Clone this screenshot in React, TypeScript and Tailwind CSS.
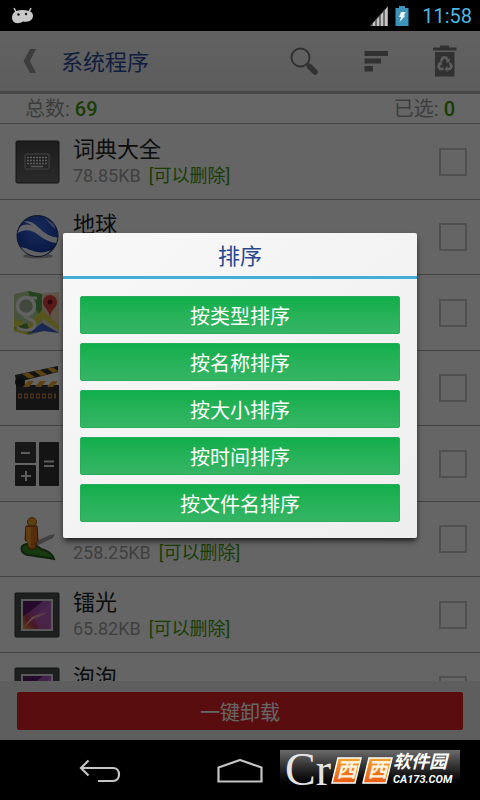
import type { ReactNode } from "react";

const FONT = "font-[Roboto,'Noto_Sans_CJK_SC',sans-serif]";

function KeyboardIcon() {
  return (
    <svg viewBox="0 0 46 46" className="size-[46px]" aria-hidden="true">
      <defs>
        <linearGradient id="kb" x1="0" y1="0" x2="0" y2="1">
          <stop offset="0" stopColor="#4a4a4a" />
          <stop offset="1" stopColor="#6a6a6a" />
        </linearGradient>
      </defs>
      <rect x="2" y="2" width="43" height="42" rx="1.5" fill="url(#kb)" stroke="#333" />
      <rect x="11" y="15" width="24" height="15" rx="1" fill="none" stroke="#a8a8a8" />
      <path d="M13 18.5h20M13 21.5h20M13 24.5h20" stroke="#e4e4e4" strokeWidth="1.6" strokeDasharray="2 1" />
      <path d="M17 27.5h12" stroke="#e4e4e4" strokeWidth="1.4" />
    </svg>
  );
}

function EarthIcon() {
  return (
    <svg viewBox="0 0 46 46" className="size-[46px]" aria-hidden="true">
      <defs>
        <radialGradient id="earth" cx="0.5" cy="0.35" r="0.7">
          <stop offset="0" stopColor="#3c6ce0" />
          <stop offset="0.7" stopColor="#1f45b8" />
          <stop offset="1" stopColor="#14256b" />
        </radialGradient>
        <clipPath id="globe">
          <circle cx="23.5" cy="22" r="20" />
        </clipPath>
      </defs>
      <ellipse cx="24" cy="42" rx="15" ry="2.5" fill="#aaa" />
      <circle cx="23.5" cy="22" r="20.5" fill="url(#earth)" stroke="#26366e" />
      <g clipPath="url(#globe)" fill="#f2f4ff">
        <path d="M9 8C15 6 19 8 25 14C31 20 37 23 45 24V29C36 29 30 25 23 20C16 15 10 15 2 20L6 13C10 10 14 10 18 12C15 9 12 8 9 8Z" />
        <path d="M5 33C12 33 17 37 23 38C28 39 33 38 37 36L31 42C21 43 12 42 5 33Z" />
        <path d="M31 4C34 8 38 13 42 15L40 10Z" opacity="0.5" />
      </g>
    </svg>
  );
}

function MapsIcon() {
  return (
    <svg viewBox="0 0 46 46" className="size-[46px]" aria-hidden="true">
      <path d="M0 4L14 1L28 4L45 2V43L30 41L16 45L0 41Z" fill="#d8d4c4" />
      <path d="M0 4L14 1L28 4V41L16 45L0 41Z" fill="#b4d098" />
      <path d="M14 1L28 4V28L18 14Z" fill="#57a84c" />
      <path d="M28 4L45 2V36L28 22Z" fill="#e8cfb0" />
      <path d="M0 28L14 36L28 20L45 36V40L28 28L14 45L0 41Z" fill="#d8d23c" />
      <path d="M14 44L28 33L45 43L30 41Z" fill="#4563c8" />
      <path d="M0 38L13 33L17 44Z" fill="#598e3e" />
      <circle cx="12" cy="16" r="8.5" fill="#a4b79d" stroke="#f5f5f5" strokeWidth="3.5" />
      <path d="M14 8h9M11 25C9 29 20 28 21 34C22 41 8 42 3 37" fill="none" stroke="#f0f0f0" strokeWidth="3" />
      <path d="M36 27C35 19 29 18 29 12A7 7 0 0 1 43 12C43 18 37 19 36 27Z" fill="#e04242" />
      <circle cx="36" cy="12" r="2.5" fill="#701818" />
    </svg>
  );
}

function ClapperIcon() {
  return (
    <svg viewBox="0 0 46 46" className="size-[46px]" aria-hidden="true">
      <path d="M1 10L44 1V7L8 16L12 20H45V45H2V16Z" fill="#333" />
      <g fill="#e9a82c">
        <path d="M8 9L14 7.5L21 12L15 13.5Z" />
        <path d="M20 6L26 5L33 9.5L27 11Z" />
        <path d="M33 3.5L39 2.5L44 6L39 8Z" />
        <path d="M14 16H20L15 22H9Z" />
        <path d="M26 16H32L27 22H21Z" />
        <path d="M38 16H44L39 22H33Z" />
      </g>
      <circle cx="6" cy="17" r="5" fill="#222" />
      <path d="M4 31h38" stroke="#b8783c" strokeWidth="5" strokeDasharray="4 2" />
      <path d="M5 31h36" stroke="#333" strokeWidth="2" strokeDasharray="2 4" />
    </svg>
  );
}

function CalculatorIcon() {
  return (
    <svg viewBox="0 0 46 46" className="size-[46px]" aria-hidden="true">
      <rect x="1" y="1" width="21" height="21" rx="1" fill="#3c3c3f" />
      <rect x="1" y="24" width="21" height="21" rx="1" fill="#323235" />
      <rect x="25" y="1" width="20" height="44" rx="1" fill="#323235" />
      <path d="M7 12h9M7 35h10M12 30v10M30 20.5h10M30 25h10" stroke="#e8e8e8" strokeWidth="2" />
    </svg>
  );
}

function PegmanIcon() {
  return (
    <svg viewBox="0 0 46 46" className="size-[46px]" aria-hidden="true">
      <path d="M18 27L36 19L41 18L39 22L20 31Z" fill="#a0a0a0" />
      <path d="M13 28C5 29 6 37 14 39C22 40 27 41 40 43C38 37 34 35 27 33C24 30 19 28 13 28Z" fill="#3c8c28" stroke="#24571b" strokeWidth="2" />
      <circle cx="18" cy="6" r="4.5" fill="#e9a02c" stroke="#94551b" />
      <path d="M12 10H23L24 24L22 27V33H15V27L11 24Z" fill="#dc701f" stroke="#763611" />
      <path d="M12 11H17V31H15L12 23Z" fill="#ed982e" />
    </svg>
  );
}

function WallpaperIcon() {
  return (
    <svg viewBox="0 0 46 46" className="size-[46px]" aria-hidden="true">
      <defs>
        <linearGradient id="laser" x1="0" y1="1" x2="1" y2="0">
          <stop offset="0" stopColor="#ef9a29" />
          <stop offset="0.25" stopColor="#b33c58" />
          <stop offset="0.5" stopColor="#ab4daa" />
          <stop offset="1" stopColor="#a45cc0" />
        </linearGradient>
      </defs>
      <rect x="1" y="1" width="44" height="44" rx="1" fill="#4b5052" stroke="#2c3031" />
      <rect x="7" y="7" width="32" height="32" fill="#e0e0e0" />
      <rect x="9" y="9" width="28" height="28" fill="url(#laser)" />
      <path d="M9 9H29L18 18L9 24Z" fill="#5c1c6b" />
      <path d="M10 35L18 25L24 22.5L34 20L25 25L19 27Z" fill="#ffc6a0" />
      <path d="M19 26L37 10V37H25Z" fill="#c46ac8" opacity="0.5" />
    </svg>
  );
}

type AppRow = { id: number; name?: string; size?: string; icon: ReactNode };

const APPS: AppRow[] = [
  { id: 1, name: "词典大全", size: "78.85KB", icon: <KeyboardIcon /> },
  { id: 2, name: "地球", icon: <EarthIcon /> },
  { id: 3, icon: <MapsIcon /> },
  { id: 4, icon: <ClapperIcon /> },
  { id: 5, icon: <CalculatorIcon /> },
  { id: 6, size: "258.25KB", icon: <PegmanIcon /> },
  { id: 7, name: "镭光", size: "65.82KB", icon: <WallpaperIcon /> },
  { id: 8, name: "泡泡", icon: <WallpaperIcon /> },
];

const SORTS = ["按类型排序", "按名称排序", "按大小排序", "按时间排序", "按文件名排序"];

function StatusBar() {
  return (
    <div className="flex h-[31px] shrink-0 items-center bg-black pr-2 pl-[11px]">
      <svg viewBox="0 0 23 17" className="h-[17px] w-[23px]" aria-hidden="true">
        <path d="M3 1L5 5M20 1L18 5" stroke="#c8c8c8" strokeWidth="1.5" />
        <path d="M5 4C9 2.5 14 2.5 18 4C22 5 23 9 21 12C19 15 15 15 12 14.5C9 16.5 4 17 2 14C0 11 1 6 5 4Z" fill="#c8c8c8" />
        <circle cx="7.5" cy="7.5" r="1.2" fill="#111" />
        <circle cx="15" cy="7" r="1.2" fill="#111" />
      </svg>
      <svg viewBox="0 0 18 20" className="ml-auto h-5 w-[18px]" aria-hidden="true">
        <path d="M0 20L18 0V20Z" fill="#6d6d6d" />
        <path d="M3 20V17L5 15V20ZM7 20V13L9 11V20ZM11 20V8.500L13 6.500V20ZM15 20V4L17.500 1V20Z" fill="#c4c4c4" />
      </svg>
      <svg viewBox="0 0 14 20" className="ml-[7px] h-5 w-[14px]" aria-hidden="true">
        <path d="M4 0H10V2H13.5V20H0.5V2H4Z" fill="#3d93b8" />
        <path d="M6 6H11L8.5 9.5H10.500L4.5 16L6 11H4Z" fill="#eef8fc" />
      </svg>
      <time className="ml-[13px] text-xl leading-6 text-[#4fb6e0]">11:58</time>
    </div>
  );
}

function Header() {
  return (
    <header className="flex h-[63px] shrink-0 items-center border-b-3 border-[#b4b4b4] bg-linear-to-b from-[#f4f4f4] to-[#e8e8e8] px-[22px]">
      <button type="button" aria-label="返回" className="flex w-[39px] items-center">
        <svg viewBox="0 0 16 26" className="h-[26px] w-4">
          <path d="M8 1H14L8 13L14 25H8L1.5 13Z" fill="#9a9a9a" />
        </svg>
      </button>
      <h1 className="pt-1 text-[22px] leading-7 text-[#2c4c9c]">系统程序</h1>
      <div className="ml-auto flex items-center gap-11">
        <button type="button" aria-label="搜索">
          <svg viewBox="0 0 30 30" className="size-[30px]">
            <circle cx="10.5" cy="11.5" r="9" fill="none" stroke="#7c7c7c" strokeWidth="2" />
            <path d="M17 17.5L20 20.5" stroke="#7c7c7c" strokeWidth="3" />
            <path d="M19.5 20.5L25 26" stroke="#7c7c7c" strokeWidth="5.5" strokeLinecap="round" />
          </svg>
        </button>
        <button type="button" aria-label="排列">
          <svg viewBox="0 0 24 22" className="h-[22px] w-6">
            <path d="M0.5 1H24V6H0.5ZM0.5 8.5H17V13.5H0.5ZM0.5 16H9V21.5H0.5Z" fill="#7c7c7c" />
          </svg>
        </button>
        <button type="button" aria-label="回收站">
          <svg viewBox="0 0 26 32" className="h-8 w-[26px]">
            <path d="M8 0.5H17V2.5H24.5V5.5H1V2.5H8Z" fill="#7c7c7c" />
            <path d="M3 7H22.5V31.5H3Z" fill="#7c7c7c" />
            <g fill="none" stroke="#e8e8e8" strokeWidth="2.6">
              <path d="M9 16L11 12.5H14L16 15.5" />
              <path d="M18 18L19.5 21.5L18 24H14.5" />
              <path d="M11.5 24H8L6.5 21.5L8 18.5" />
            </g>
            <path d="M17.8 13V17.5H13.5ZM15.5 21V27L12.5 24ZM5.5 18.5L9 16L10.5 20Z" fill="#e8e8e8" />
          </svg>
        </button>
      </div>
    </header>
  );
}

function Summary() {
  return (
    <div className="flex h-[30px] shrink-0 items-center justify-between border-b border-[#b0b0b0] bg-white px-[25px] text-xl leading-6 text-[#9a9a9a]">
      <p>
        总数: <span className="font-medium text-[#419a0c]">69</span>
      </p>
      <p>
        已选: <span className="font-medium text-[#419a0c]">0</span>
      </p>
    </div>
  );
}

function Row({ app }: { app: AppRow }) {
  return (
    <li className="border-b border-[#aaaaaa] odd:h-[76px] even:h-[75px]">
      <label className="flex h-full items-center pr-[13px] pl-[14px]">
        {app.icon}
        <span className="ml-[13px] flex flex-1 flex-col">
          <span className="h-7 text-[22px] leading-7 text-[#222222]">{app.name}</span>
          <span className="flex h-6 gap-2 text-lg leading-6 text-[#a0a0a0]">
            {app.size && (
              <>
                <span>{app.size}</span>
                <span className="text-[#419a0c]">[可以删除]</span>
              </>
            )}
          </span>
        </span>
        <input type="checkbox" className="size-7 appearance-none border-2 border-[#c8c8c8]" />
      </label>
    </li>
  );
}

function SortDialog() {
  return (
    <div className="absolute inset-0 flex items-center justify-center bg-black/60 px-[63px]">
      <div
        role="dialog"
        aria-labelledby="sort-title"
        className="w-full rounded-xs bg-linear-to-br from-[#f8f8f8] to-[#eeeeee] shadow-md shadow-black/60"
      >
        <h2
          id="sort-title"
          className="border-b-3 border-[#45acd6] pt-[10px] pb-[5px] text-center text-[22px] leading-7 text-[#27478f]"
        >
          排序
        </h2>
        <div className="flex flex-col gap-[9px] px-[17px] pt-[17px] pb-4">
          {SORTS.map((label) => (
            <button
              key={label}
              type="button"
              className="h-[38px] rounded-xs border border-[#28ad5a] bg-linear-to-b from-[#0fae4b] to-[#35b565] pt-[3px] text-xl leading-6 text-white"
            >
              {label}
            </button>
          ))}
        </div>
      </div>
    </div>
  );
}

function NavBar() {
  return (
    <nav className="flex h-[60px] shrink-0 items-center bg-black px-[30px] pt-1">
      <button type="button" aria-label="后退" className="flex flex-1 justify-center">
        <svg viewBox="0 0 42 26" className="h-[26px] w-[42px]" fill="none" stroke="#c4c4c4" strokeWidth="2.2">
          <path d="M9.5 1.5L2 9L9.5 16.5M2 9H34C42 9 42 22 34 22H19" />
        </svg>
      </button>
      <button type="button" aria-label="主页" className="flex flex-1 justify-center">
        <svg viewBox="0 0 46 26" className="h-[26px] w-[46px]" fill="none" stroke="#c4c4c4" strokeWidth="2.2">
          <path d="M1.5 8.5L23 1L44.500 8.5V22.5H1.5Z" />
        </svg>
      </button>
      <button type="button" aria-label="最近" className="flex flex-1 justify-center">
        <svg viewBox="0 0 46 26" className="h-[26px] w-[46px]" fill="none" stroke="#c4c4c4" strokeWidth="2">
          <path d="M8 2H44V18H8ZM2 8V24H36" />
        </svg>
      </button>
    </nav>
  );
}

function LogoTile() {
  return (
    <span className="relative flex h-[27px] w-[31px] items-center justify-center text-xl leading-6 font-bold text-[#fff3df] italic">
      <svg viewBox="0 0 31 27" className="absolute inset-0 h-full w-full" aria-hidden="true">
        <defs>
          <linearGradient id="tile" x1="0" y1="0" x2="0" y2="1">
            <stop offset="0" stopColor="#f5a12a" />
            <stop offset="1" stopColor="#ea5a12" />
          </linearGradient>
        </defs>
        <path d="M7 1H30L24 26H1Z" fill="url(#tile)" stroke="#fff" strokeWidth="1.5" />
      </svg>
      <span className="relative">西</span>
    </span>
  );
}

function Watermark() {
  return (
    <div className="absolute right-5 bottom-[10px] flex h-10 w-[180px] items-center bg-linear-to-b from-[#6c6c6c] to-black pl-[5px]">
      <span className="w-[46px] font-['Liberation_Serif',serif] text-[46px] leading-10 text-[#e4e4e4]">Cr</span>
      <LogoTile />
      <LogoTile />
      <span className="flex flex-col whitespace-nowrap text-white italic">
        <span className="text-lg leading-5 font-bold">软件园</span>
        <span className="text-[11px] leading-4 font-bold">CA173.COM</span>
      </span>
    </div>
  );
}

export default function App() {
  return (
    <div className={`relative flex h-dvh flex-col overflow-hidden bg-black ${FONT}`}>
      <StatusBar />
      <main className="relative flex min-h-0 flex-1 flex-col bg-white">
        <Header />
        <Summary />
        <ul className="min-h-0 flex-1 overflow-hidden bg-[#fcfcfc]">
          {APPS.map((app) => (
            <Row key={app.id} app={app} />
          ))}
        </ul>
        <div className="flex shrink-0 bg-[#ececec] px-[17px] pt-[11px] pb-[10px]">
          <button type="button" className="h-[38px] flex-1 rounded-xs bg-[#e22226] pt-[3px] text-xl leading-6 text-white">
            一键卸载
          </button>
        </div>
        <SortDialog />
      </main>
      <NavBar />
      <Watermark />
    </div>
  );
}
